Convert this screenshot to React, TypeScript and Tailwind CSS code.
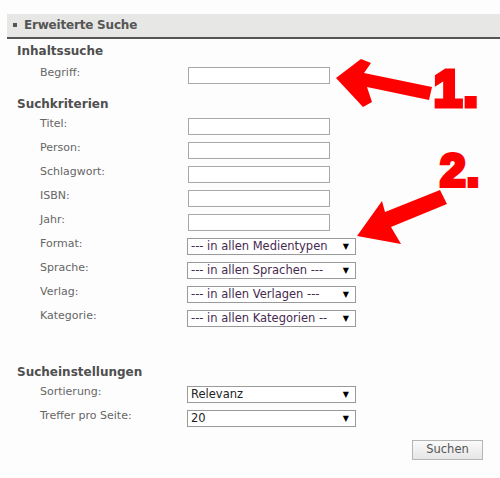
import React from 'react';

const font = { fontFamily: '"DejaVu Sans", Verdana, sans-serif' };

interface FieldRow {
  label: string;
  kind: 'input' | 'select';
  value?: string;
  purple?: boolean;
}

const criteria: FieldRow[] = [
  { label: 'Titel:', kind: 'input' },
  { label: 'Person:', kind: 'input' },
  { label: 'Schlagwort:', kind: 'input' },
  { label: 'ISBN:', kind: 'input' },
  { label: 'Jahr:', kind: 'input' },
  { label: 'Format:', kind: 'select', value: '--- in allen Medientypen', purple: true },
  { label: 'Sprache:', kind: 'select', value: '--- in allen Sprachen ---', purple: true },
  { label: 'Verlag:', kind: 'select', value: '--- in allen Verlagen ---', purple: true },
  { label: 'Kategorie:', kind: 'select', value: '--- in allen Kategorien --', purple: true },
];

const settings: FieldRow[] = [
  { label: 'Sortierung:', kind: 'select', value: 'Relevanz' },
  { label: 'Treffer pro Seite:', kind: 'select', value: '20' },
];

function Row({ row }: { row: FieldRow }) {
  return (
    <div className="flex h-[24px] items-start">
      <div className="w-[187px] shrink-0 pl-[40px] text-[11px] leading-[12px] text-[#666]">{row.label}</div>
      {row.kind === 'input' ? (
        <div className="ml-[1px] h-[17px] w-[142px] border border-[#a8a8a8] bg-white" />
      ) : (
        <div
          className={`flex h-[17px] w-[169px] items-center justify-between border border-[#9a9a9a] bg-white pl-[3px] pr-[6px] text-[11.5px] leading-[15px] ${
            row.purple ? 'text-[#46294f]' : 'text-[#222]'
          }`}
        >
          <span className="whitespace-nowrap">{row.value}</span>
          <span className="text-[8px] text-black">▼</span>
        </div>
      )}
    </div>
  );
}

function Heading({ children, className }: { children: React.ReactNode; className?: string }) {
  return (
    <div className={`pl-[17px] text-[12px] font-bold leading-[16px] text-[#4f4f4f] ${className ?? ''}`}>
      {children}
    </div>
  );
}

export default function App() {
  return (
    <div className="relative h-[478px] w-[500px] overflow-hidden bg-[#fdfdfd]" style={font}>
      <div className="ml-[7px] mt-[14px] flex h-[25px] items-center border-b-2 border-[#555] bg-[#e7e7e5] pb-[1px]">
        <span className="ml-[6px] mr-[7px] h-[4px] w-[4px] bg-[#555]" />
        <span className="text-[12px] font-bold tracking-[-0.2px] text-[#555]">Erweiterte Suche</span>
      </div>

      <Heading className="mt-[4px]">Inhaltssuche</Heading>
      <div className="mt-[8px]">
        <Row row={{ label: 'Begriff:', kind: 'input' }} />
      </div>

      <Heading className="mt-[5px]">Suchkriterien</Heading>
      <div className="mt-[6px] flex flex-col">
        {criteria.map((r) => (
          <Row key={r.label} row={r} />
        ))}
      </div>

      <Heading className="mt-[30px]">Sucheinstellungen</Heading>
      <div className="mt-[6px] flex flex-col">
        {settings.map((r) => (
          <Row key={r.label} row={r} />
        ))}
      </div>

      <div className="mt-[6px] flex justify-end pr-[17px]">
        <button className="h-[20px] w-[71px] border border-[#b5b5b5] bg-gradient-to-b from-[#fafafa] to-[#e6e6e6] text-[11.5px] text-[#555]">
          Suchen
        </button>
      </div>

      {/* red annotation arrows */}
      <svg className="pointer-events-none absolute left-0 top-0" width="500" height="478">
        <polygon
          fill="#f00"
          points="336,78 361,59 371,63 364,73 432,87 429,100 367,87 372,102 363,107"
        />
        <polygon
          fill="#f00"
          points="357,236 382,201 385,212 440,190 447,204 391,227 401,244"
        />
        <text
          x="434"
          y="106"
          fill="#f00"
          stroke="#f00"
          strokeWidth="5"
          fontSize="50"
          fontWeight="bold"
          letterSpacing="2"
          fontFamily='"Liberation Sans", Arial, sans-serif'
        >
          1.
        </text>
        <text
          x="440"
          y="186"
          fill="#f00"
          stroke="#f00"
          strokeWidth="4"
          fontSize="46"
          fontWeight="bold"
          letterSpacing="1"
          fontFamily='"Liberation Sans", Arial, sans-serif'
        >
          2.
        </text>
      </svg>
    </div>
  );
}
